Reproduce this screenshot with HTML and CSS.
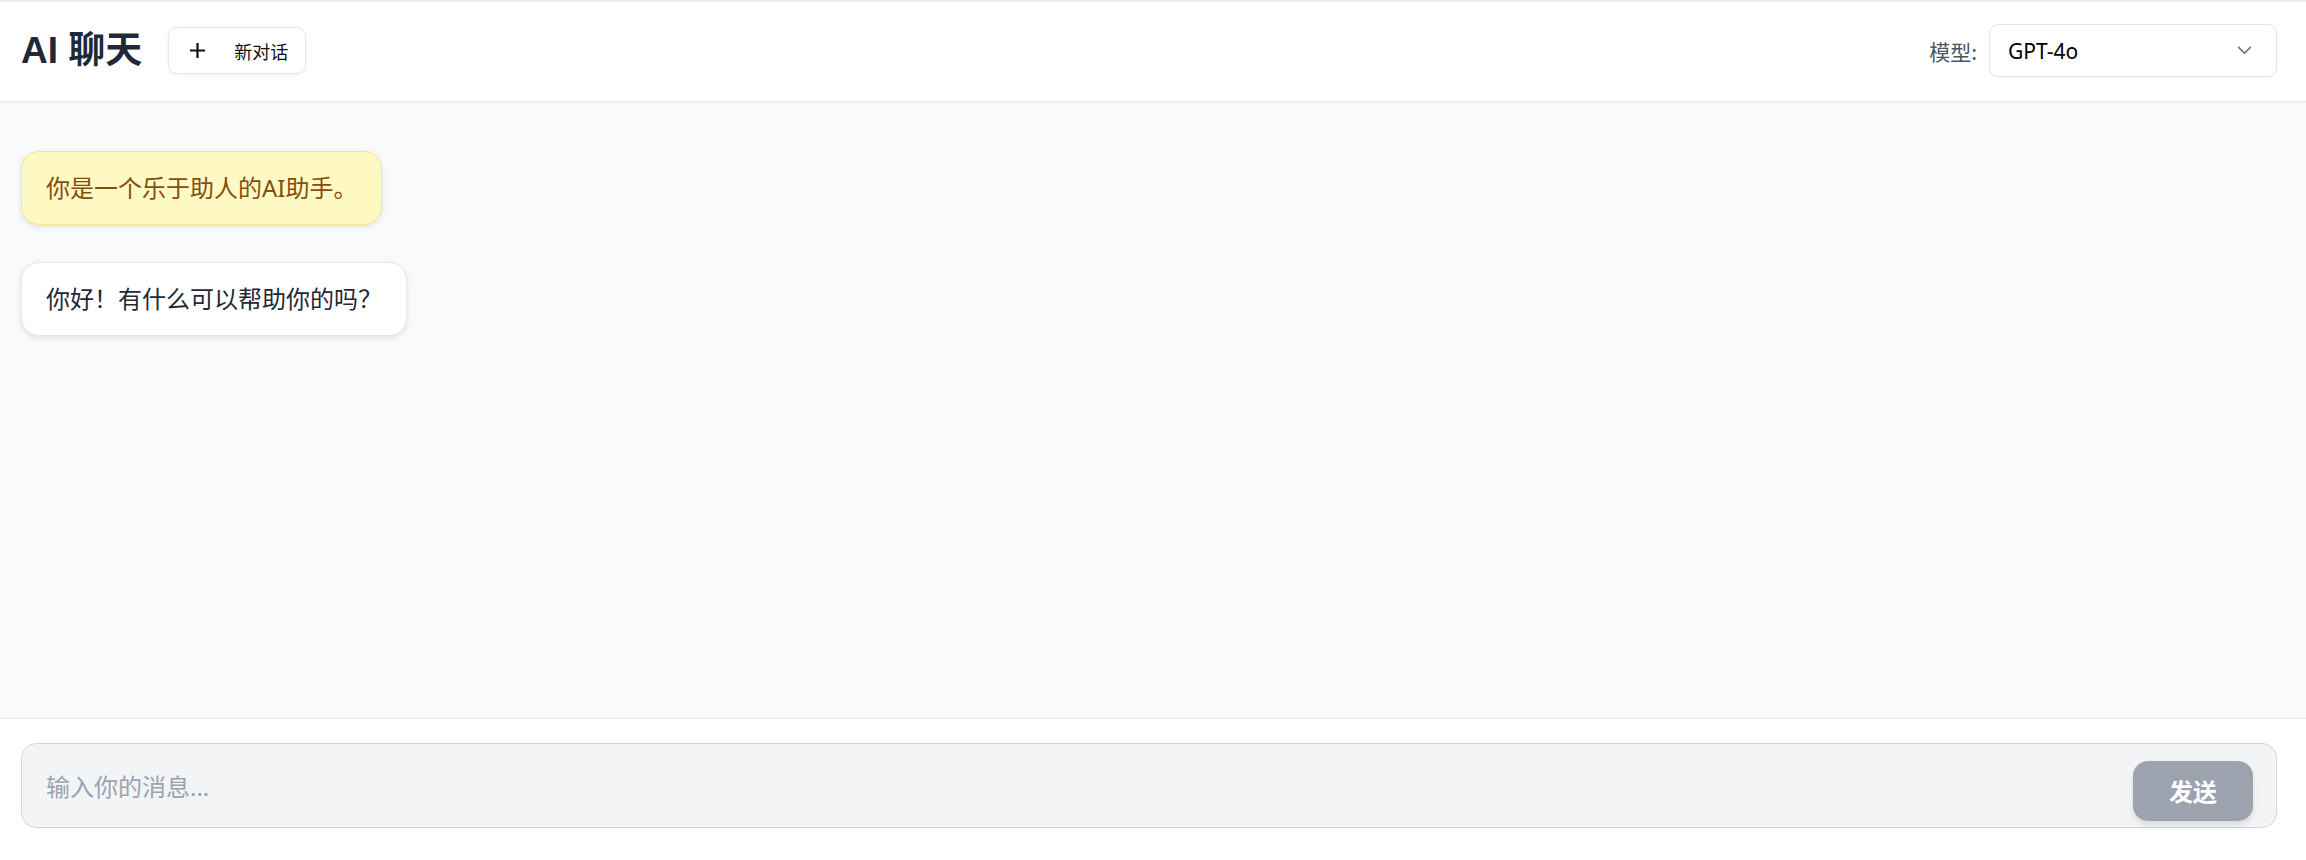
FILE: index.html
```html
<!DOCTYPE html>
<html lang="zh-CN">
<head>
<meta charset="utf-8">
<title>AI 聊天</title>
<link rel="stylesheet" href="styles.css">
</head>
<body>
<div class="app">
  <header class="topbar">
    <div class="left">
      <h1 class="title">AI 聊天</h1>
      <button class="new-chat" type="button">
        <svg class="plus" viewBox="0 0 17 17" width="17" height="17" aria-hidden="true"><path d="M8.5 1v15M1 8.5h15" stroke="#111" stroke-width="2.2" fill="none"/></svg>
        <span>新对话</span>
      </button>
    </div>
    <div class="right">
      <span class="model-label">模型:</span>
      <div class="select">
        <span>GPT-4o</span>
        <svg class="chev" viewBox="0 0 16 10" width="15" height="9" aria-hidden="true"><path d="M1.5 1.5l6.5 6.5 6.5-6.5" stroke="#6b7280" stroke-width="1.8" fill="none" stroke-linecap="round" stroke-linejoin="round"/></svg>
      </div>
    </div>
  </header>
  <main class="messages">
    <div class="bubble system">你是一个乐于助人的AI助手。</div>
    <div class="bubble assistant">你好！有什么可以帮助你的吗？</div>
  </main>
  <footer class="footer">
    <div class="composer">
      <div class="placeholder">输入你的消息...</div>
      <button class="send" type="button">发送</button>
    </div>
  </footer>
</div>
</body>
</html>
```
FILE: styles.css
```css
html, body {
  margin: 0;
  padding: 0;
  height: 100%;
}
body {
  font-family: "Noto Sans", "Noto Sans CJK SC", sans-serif;
  color: #1f2937;
  background: #ffffff;
}
.app {
  height: 860px;
  display: flex;
  flex-direction: column;
}
.topbar {
  height: 102px;
  box-sizing: border-box;
  flex: none;
  display: flex;
  align-items: center;
  justify-content: space-between;
  padding: 0 29px 0 21px;
  background: #ffffff;
  border-bottom: 1px solid #e5e7eb;
  box-shadow: inset 0 4px 3px -3px rgba(0,0,0,0.14), 0 1px 3px rgba(0,0,0,0.05);
  position: relative;
  z-index: 1;
}
.left {
  display: flex;
  align-items: center;
  gap: 26px;
}
.title {
  margin: 0;
  font-family: "Liberation Sans", "Noto Sans CJK SC", sans-serif;
  font-weight: 700;
  font-size: 37px;
  line-height: 48px;
  color: #1f2937;
}
.new-chat {
  height: 47px;
  width: 138px;
  box-sizing: border-box;
  display: flex;
  align-items: center;
  gap: 28px;
  padding: 0 0 0 20px;
  background: #ffffff;
  border: 1px solid #e5e7eb;
  border-radius: 9px;
  box-shadow: 0 1px 3px rgba(0,0,0,0.07);
  font-family: "Noto Sans CJK SC", sans-serif;
  font-size: 18px;
  color: #111111;
  line-height: 24px;
}
.plus {
  display: block;
  flex: none;
}
.right {
  display: flex;
  align-items: center;
  gap: 12px;
}
.model-label {
  font-family: "Noto Sans CJK SC", sans-serif;
  font-size: 21px;
  color: #4b5563;
  line-height: 28px;
}
.select {
  width: 288px;
  height: 53px;
  box-sizing: border-box;
  display: flex;
  align-items: center;
  justify-content: space-between;
  padding: 0 24px 0 18px;
  border: 1px solid #e5e7eb;
  border-radius: 9px;
  background: #ffffff;
  box-shadow: 0 1px 2px rgba(0,0,0,0.04);
  font-family: "Noto Sans", sans-serif;
  font-size: 21px;
  color: #000000;
}
.chev {
  display: block;
}
.messages {
  flex: 1;
  background: #f9fafb;
  padding: 49px 29px 0 21px;
  display: flex;
  flex-direction: column;
  align-items: flex-start;
  gap: 37px;
}
.bubble {
  box-sizing: border-box;
  padding: 18px 24px;
  border-radius: 18px;
  font-family: "Noto Sans", "Noto Sans CJK SC", sans-serif;
  font-size: 24px;
  line-height: 36px;
  box-shadow: 0 2px 6px rgba(0,0,0,0.10);
}
.bubble.system {
  background: #fef9c3;
  border: 1px solid #fde68a;
  color: #854d0e;
}
.bubble.assistant {
  background: #ffffff;
  border: 1px solid #e5e7eb;
  color: #1f2937;
}
.footer {
  flex: none;
  height: 142px;
  box-sizing: border-box;
  background: #ffffff;
  border-top: 1px solid #e5e7eb;
  padding: 24px 29px 0 21px;
}
.composer {
  height: 85px;
  box-sizing: border-box;
  display: flex;
  align-items: flex-start;
  justify-content: space-between;
  padding: 17px 23px 0 24px;
  background: #f3f4f6;
  border: 1px solid #d1d5db;
  border-radius: 15px;
}
.placeholder {
  margin-top: 8px;
  font-family: "Noto Sans", "Noto Sans CJK SC", sans-serif;
  font-size: 24px;
  line-height: 36px;
  color: #9ca3af;
}
.send {
  width: 120px;
  height: 60px;
  border: none;
  border-radius: 15px;
  background: #9ca3af;
  color: #ffffff;
  font-family: "Noto Sans CJK SC", sans-serif;
  font-weight: 700;
  font-size: 24px;
  line-height: 32px;
  box-shadow: 0 4px 6px rgba(0,0,0,0.10);
  padding: 0;
}
```
